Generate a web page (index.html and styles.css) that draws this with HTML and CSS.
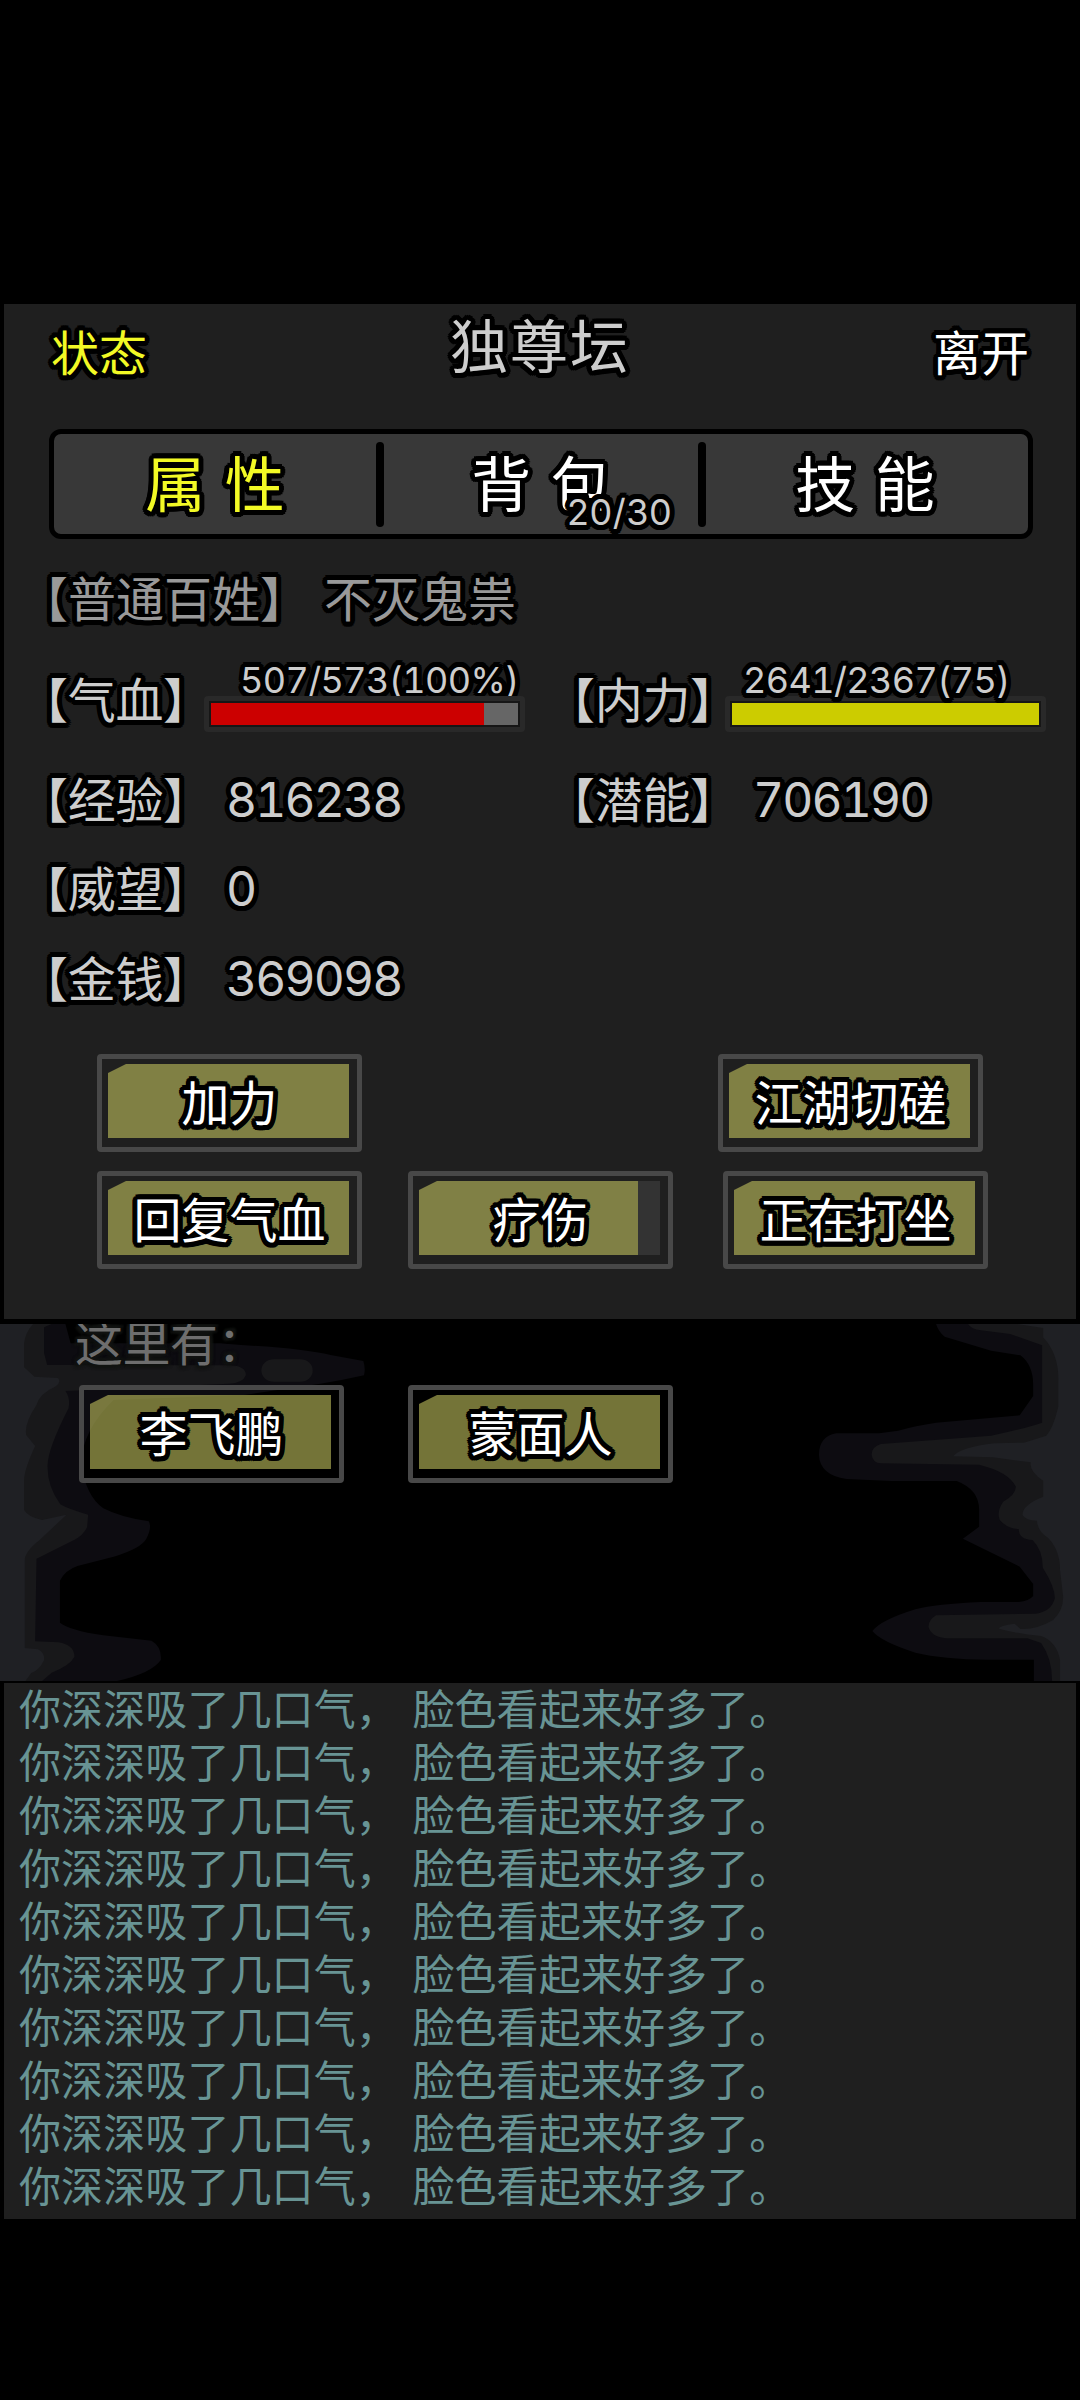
FILE: index.html
```html
<!DOCTYPE html>
<html lang="zh-CN">
<head>
<meta charset="utf-8">
<title>独尊坛</title>
<link rel="stylesheet" href="styles.css">
</head>
<body>
<main class="game">
  <section class="panel">
    <header class="panel-head outlined">
      <span class="link active">状态</span>
      <h1 class="title">独尊坛</h1>
      <span class="link">离开</span>
    </header>

    <nav class="tabs outlined">
      <div class="tab active">属 性</div>
      <div class="divider"></div>
      <div class="tab tab-bag">背 包<span class="count">20/30</span></div>
      <div class="divider"></div>
      <div class="tab tab-skill">技 能</div>
    </nav>

    <div class="stats outlined">
      <div class="row row-name"><span>【普通百姓】</span><span class="nick">不灭鬼祟</span></div>
      <div class="row row-meters">
        <div class="stat">
          <span class="label">【气血】</span>
          <div class="meter">
            <span class="meter-text hp-text">507/573(100%)</span>
            <div class="bar"><div class="track"><div class="fill hp" style="width:89%"></div></div></div>
          </div>
        </div>
        <div class="stat">
          <span class="label">【内力】</span>
          <div class="meter meter-mp">
            <span class="meter-text mp-text">2641/2367(75)</span>
            <div class="bar"><div class="track"><div class="fill mp" style="width:100%"></div></div></div>
          </div>
        </div>
      </div>
      <div class="row row-exp">
        <div class="stat"><span class="label">【经验】</span><span class="value">816238</span></div>
        <div class="stat"><span class="label">【潜能】</span><span class="value">706190</span></div>
      </div>
      <div class="row row-fame">
        <div class="stat"><span class="label">【威望】</span><span class="value">0</span></div>
      </div>
      <div class="row row-money">
        <div class="stat"><span class="label">【金钱】</span><span class="value">369098</span></div>
      </div>
    </div>

    <div class="actions outlined">
      <button class="btn"><span class="face"></span><b>加力</b></button>
      <span></span>
      <button class="btn spar"><span class="face"></span><b>江湖切磋</b></button>
      <button class="btn"><span class="face"></span><b>回复气血</b></button>
      <button class="btn"><span class="face cooling"></span><b>疗伤</b></button>
      <button class="btn"><span class="face"></span><b>正在打坐</b></button>
    </div>
  </section>

  <section class="scene">
    <svg class="rocks" viewBox="0 0 1080 357" aria-hidden="true">
      <g transform="scale(.34439 .33333) translate(0 -102)">
        <path fill="#0d0c11" d="M0 102H190L205 160L640 160L700 165Q880 175 960 195L1055 213Q1062 236 1057 256Q990 272 930 281L710 315L330 330Q240 420 235 520Q250 620 300 655Q350 682 432 694Q442 712 425 746Q410 775 330 800L225 828Q190 840 174 872V998Q200 1020 300 1036L440 1052Q470 1070 467 1110Q440 1150 340 1173H0Z"/>
        <path fill="#18181a" d="M0 102H150L128 112V190L137 225L660 226Q714 226 714 255Q705 280 665 281L190 303Q205 325 199 355Q137 480 138 530Q138 590 175 643Q200 658 256 674L253 712Q240 738 215 750L106 806L102 1054L170 1057Q216 1065 216 1100Q205 1125 150 1148L122 1173H0Z"/>
        <rect x="759" y="208" width="149" height="67" rx="36" fill="#18181a"/>
        <path fill="#1f2024" d="M0 102H96Q72 130 70 160V232L100 260L168 264Q180 275 160 290Q115 310 106 345Q70 400 76 435L102 468Q70 540 70 570V660Q80 680 122 690L193 674L115 750Q72 785 72 810V1074L110 1078Q130 1088 128 1110Q115 1140 90 1150L74 1173H0Z"/>
      </g>
      <g transform="translate(540 0) scale(.34439 .33333) translate(0 -102)">
        <path fill="#0d0c11" d="M1568 102H1150Q1158 127 1175 140L1310 182L1395 196Q1432 225 1432 285V318L1393 376L1150 398Q1090 407 1040 422L985 430H860Q810 440 810 494Q812 555 890 567L1020 573H1210Q1278 600 1275 665V710L1228 746L1393 830L1432 882V918Q1420 933 1390 936L1280 936Q1150 942 1090 958Q990 990 965 1023Q990 1055 1090 1088Q1170 1108 1300 1109H1434V1173H1568Z"/>
        <path fill="#18181a" d="M1568 102H1243Q1252 118 1280 121L1365 132L1458 166V398Q1410 415 1310 437L990 462Q963 470 963 494Q966 519 990 520L1275 524Q1360 545 1382 590Q1380 615 1345 635Q1325 665 1335 690Q1355 715 1390 717Q1390 748 1430 750Q1460 780 1460 833Q1495 890 1495 925Q1485 965 1440 971L1150 976Q1128 990 1128 1010Q1135 1040 1180 1045H1415L1455 1059Q1487 1105 1487 1173H1568Z"/>
        <path fill="#1f2024" d="M1568 102H1385L1461 114V142Q1508 195 1505 275V350Q1490 415 1470 437L1405 458L1320 460Q1220 472 1200 499L1315 502L1425 517Q1420 545 1461 572V620Q1400 645 1401 675Q1410 692 1443 692Q1445 725 1475 743Q1510 780 1510 840L1519 920Q1520 960 1490 990Q1440 1020 1395 1017L1378 1001Q1330 1008 1333 1016Q1380 1030 1455 1038Q1500 1055 1510 1110V1173H1568Z"/>
      </g>
    </svg>
    <p class="here">这里有：</p>
    <div class="people outlined">
      <button class="btn"><span class="face"></span><b>李飞鹏</b></button>
      <button class="btn"><span class="face"></span><b>蒙面人</b></button>
    </div>
  </section>

  <section class="log">
    <p>你深深吸了几口气， 脸色看起来好多了。</p>
    <p>你深深吸了几口气， 脸色看起来好多了。</p>
    <p>你深深吸了几口气， 脸色看起来好多了。</p>
    <p>你深深吸了几口气， 脸色看起来好多了。</p>
    <p>你深深吸了几口气， 脸色看起来好多了。</p>
    <p>你深深吸了几口气， 脸色看起来好多了。</p>
    <p>你深深吸了几口气， 脸色看起来好多了。</p>
    <p>你深深吸了几口气， 脸色看起来好多了。</p>
    <p>你深深吸了几口气， 脸色看起来好多了。</p>
    <p>你深深吸了几口气， 脸色看起来好多了。</p>
  </section>
</main>
</body>
</html>
```
FILE: styles.css
```css
* { box-sizing: border-box; margin: 0; padding: 0; }

body {
  background: #000;
  font-family: "Noto Sans CJK SC", sans-serif;
  font-size: 48px;
  line-height: 48px;
  color: #cdcdcd;
  text-spacing-trim: space-all;
}

.game { width: 1080px; height: 2400px; padding-top: 304px; overflow: hidden; }

/* Round black contour around glyphs */
.outlined {
  --o: #000;
  text-shadow:
    5px 0 0 var(--o), 4.6px 1.9px 0 var(--o), 3.5px 3.5px 0 var(--o), 1.9px 4.6px 0 var(--o),
    0 5px 0 var(--o), -1.9px 4.6px 0 var(--o), -3.5px 3.5px 0 var(--o), -4.6px 1.9px 0 var(--o),
    -5px 0 0 var(--o), -4.6px -1.9px 0 var(--o), -3.5px -3.5px 0 var(--o), -1.9px -4.6px 0 var(--o),
    0 -5px 0 var(--o), 1.9px -4.6px 0 var(--o), 3.5px -3.5px 0 var(--o), 4.6px -1.9px 0 var(--o),
    2.5px 0 0 var(--o), -2.5px 0 0 var(--o), 0 2.5px 0 var(--o), 0 -2.5px 0 var(--o);
}

.panel { margin: 0 4px; height: 1015px; background: #1f1f1f; }

.panel-head {
  display: grid;
  grid-template-columns: 1fr auto 1fr;
  height: 125px;
  padding: 22px 47px 0 47px;
}
.link { color: #fff; }
.link:last-child { text-align: right; }
.active { color: #f2f925; }
.title { font-size: 58px; font-weight: 400; letter-spacing: 2px; line-height: 60px; margin-top: -13px; color: #cdcdcd; }

.tabs {
  display: flex;
  align-items: center;
  height: 110px;
  margin: 0 43px 0 45px;
  border: 5px solid #000;
  border-radius: 12px;
  background: #383838;
}
.tab {
  position: relative;
  width: 322px;
  padding-bottom: 6px;
  text-align: center;
  font-size: 60px;
  line-height: 60px;
  word-spacing: 6px;
  color: #fff;
}
.tab-bag { width: 314px; }
.tab-skill { padding-right: 4px; }
.tab.active { color: #f2f925; }
.divider { width: 8px; height: 85px; border-radius: 4px; background: #000; }
.count {
  position: absolute;
  left: 183px;
  top: 43px;
  font: 36px/36px Inter, sans-serif;
  letter-spacing: .5px;
  color: #cdcdcd;
}

.stats { margin: 10px 0 0 16px; }
.row { display: grid; grid-template-columns: 527px 1fr; align-items: center; }
.row-name { height: 100px; display: flex; padding-bottom: 6px; color: #999; }
.nick { margin-left: 16px; }
.row-meters { height: 101px; }
.row-exp { height: 99px; }
.row-fame { height: 80px; }
.row-money { height: 100px; }
.stat { display: flex; align-items: center; }
.label { width: 192px; padding-bottom: 6px; letter-spacing: -.3px; white-space: nowrap; }
.value {
  margin-left: 14px;
  font: 48px/48px Inter, sans-serif;
  font-feature-settings: "tnum";
  letter-spacing: -1.9px;
}
.meter { width: 321px; height: 68px; margin: -4px 0 0 -8px; display: flex; flex-direction: column; }
.meter-mp { margin-left: -14px; }
.meter-text {
  height: 32px;
  font: 36px/32px Inter, sans-serif;
  font-feature-settings: "tnum", "calt" 0;
  letter-spacing: -.6px;
}
.hp-text { padding-left: 36px; }
.mp-text { position: relative; padding-left: 18px; }
.bar { height: 36px; padding: 2px; border: 5px solid #292929; border-radius: 4px; background: #161616; }
.track { height: 100%; background: #666; }
.fill { height: 100%; }
.hp { background: #cc0000; }
.mp { background: #cccc00; }

.actions {
  display: grid;
  grid-template-columns: 311px 315px 265px;
  row-gap: 19px;
  margin: 25px 0 0 93px;
}
.spar { margin-left: -5px; }

.btn {
  display: grid;
  width: 265px;
  height: 98px;
  border: 5px solid #484848;
  border-radius: 4px;
  background: none;
  color: #fff;
  font: inherit;
  text-shadow: inherit;
}
.face, .btn b { grid-area: 1 / 1; }
.btn b {
  position: relative;
  padding-bottom: 6px;
  font-weight: 400;
  place-self: center;
  white-space: nowrap;
}
.face {
  width: 241px;
  height: 74px;
  margin: 5px 0 0 6px;
  background: rgba(190, 190, 92, .61);
  clip-path: polygon(18px 0, 100% 0, 100% 100%, 0 100%, 0 9px);
}
.face.cooling { background: linear-gradient(90deg, #808045 219px, #333 219px); }

.scene { position: relative; height: 357px; margin-top: 5px; overflow: hidden; }
.rocks { position: absolute; left: 0; top: 0; width: 1080px; height: 357px; }
.here {
  position: relative;
  height: 61px;
  padding-left: 75px;
  line-height: 32px;
  letter-spacing: -.5px;
  color: #6e6e6e;
  text-shadow: 0 0 5px #121412, 2px 2px 3px #121412, -2px -2px 3px #121412, 3px -3px 3px #121412, -3px 3px 3px #121412;
}
.people { position: relative; display: flex; gap: 64px; padding-left: 79px; }

.log {
  height: 536px;
  margin: 2px 4px 0;
  padding-left: 15px;
  background: #1f1f1f;
  font-size: 42px;
  line-height: 53px;
  letter-spacing: .1px;
  word-spacing: 5px;
  color: #689494;
}
.log p { height: 53px; line-height: 48px; }
```
